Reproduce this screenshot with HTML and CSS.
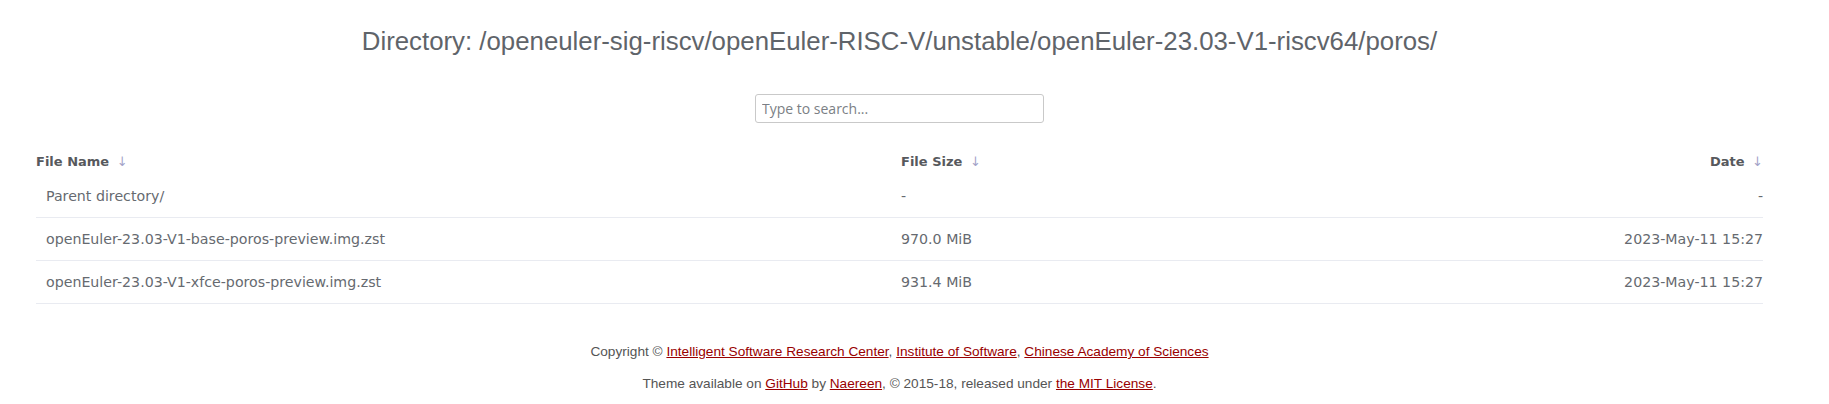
FILE: index.html
```html
<!DOCTYPE html>
<html>
<head>
<meta charset="utf-8">
<title>Directory listing</title>
<link rel="stylesheet" href="styles.css">
</head>
<body>
<div class="page">
  <h1 class="title">Directory: /openeuler-sig-riscv/openEuler-RISC-V/unstable/openEuler-23.03-V1-riscv64/poros/</h1>
  <div class="search-wrap">
    <input class="search" type="text" placeholder="Type to search...">
  </div>
  <table class="listing">
    <colgroup>
      <col class="c-name">
      <col class="c-size">
      <col class="c-date">
    </colgroup>
    <thead>
      <tr>
        <th class="h-name">File Name <span class="arrow">↓</span></th>
        <th class="h-size">File Size <span class="arrow">↓</span></th>
        <th class="h-date">Date <span class="arrow">↓</span></th>
      </tr>
    </thead>
    <tbody>
      <tr>
        <td class="name">Parent directory/</td>
        <td class="size">-</td>
        <td class="date">-</td>
      </tr>
      <tr>
        <td class="name">openEuler-23.03-V1-base-poros-preview.img.zst</td>
        <td class="size">970.0 MiB</td>
        <td class="date">2023-May-11 15:27</td>
      </tr>
      <tr>
        <td class="name">openEuler-23.03-V1-xfce-poros-preview.img.zst</td>
        <td class="size">931.4 MiB</td>
        <td class="date">2023-May-11 15:27</td>
      </tr>
    </tbody>
  </table>
  <footer class="footer">
    <p>Copyright © <a href="#">Intelligent Software Research Center</a>, <a href="#">Institute of Software</a>, <a href="#">Chinese Academy of Sciences</a></p>
    <p>Theme available on <a href="#">GitHub</a> by <a href="#">Naereen</a>, © 2015-18, released under <a href="#">the MIT License</a>.</p>
  </footer>
</div>
</body>
</html>
```

FILE: styles.css
```css
html, body {
  margin: 0;
  padding: 0;
  background: #ffffff;
}

.page {
  width: 1800px;
  box-sizing: border-box;
  padding: 0 37px 0 36px;
  color: #61666c;
}

.title {
  margin: 0;
  padding-top: 17px;
  font-family: "Liberation Sans", Arial, sans-serif;
  font-weight: normal;
  font-size: 25.8px;
  line-height: 48px;
  text-align: center;
  color: #5f646a;
}

.search-wrap {
  display: flex;
  justify-content: center;
  margin-top: 29px;
}

.search {
  width: 289px;
  height: 29px;
  box-sizing: border-box;
  border: 1px solid #c9c9c9;
  border-radius: 3px;
  padding: 0 6px;
  font-family: "Open Sans", sans-serif;
  font-size: 14px;
  color: #555;
  outline: none;
}

.search::placeholder {
  color: #7b7f85;
}

.listing {
  margin-top: 24px;
  width: 100%;
  border-collapse: collapse;
  table-layout: fixed;
  font-family: "DejaVu Sans", Verdana, sans-serif;
  font-size: 14.2px;
}

.c-name { width: 865px; }
.c-size { width: 400px; }

.listing th {
  height: 28px;
  padding: 0;
  font-size: 13px;
  font-weight: bold;
  color: #57595d;
  text-align: left;
  vertical-align: middle;
}

.listing th.h-date { text-align: right; }

.arrow {
  font-weight: normal;
  color: #a3a3c8;
  margin-left: 3px;
}

.listing td {
  height: 42px;
  padding: 0;
  vertical-align: middle;
  color: #666a70;
  border-bottom: 1px solid #e9ebf1;
  white-space: nowrap;
}

.listing td.name { padding-left: 10px; }
.listing td.date { text-align: right; }

.footer {
  margin-top: 32px;
  text-align: center;
  font-family: "Liberation Sans", Arial, sans-serif;
  font-size: 13.65px;
  line-height: 32px;
  color: #555;
}

.footer p { margin: 0; }

.footer a {
  color: #990000;
  text-decoration: underline;
}
```
